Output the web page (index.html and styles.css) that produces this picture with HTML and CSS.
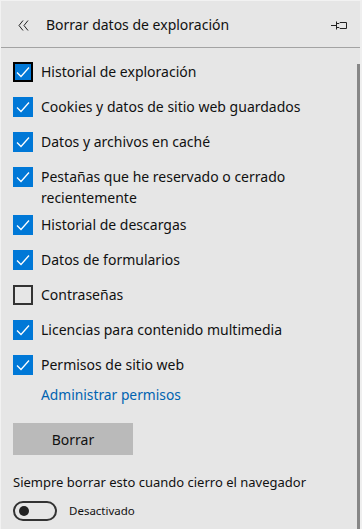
FILE: index.html
```html
<!DOCTYPE html>
<html lang="es">
<head>
<meta charset="utf-8">
<title>Borrar datos de exploración</title>
<link rel="stylesheet" href="styles.css">
</head>
<body>
<div class="panel">
  <header class="header">
    <span class="back">
      <svg width="11" height="11" viewBox="0 0 11 11"><path d="M5 0.5 L1 5.5 L5 10.5 M10 0.5 L6 5.5 L10 10.5" fill="none" stroke="#222" stroke-width="1"/></svg>
    </span>
    <h1 class="title">Borrar datos de exploración</h1>
    <span class="pin">
      <svg width="16" height="9" viewBox="0 0 16 9"><path d="M0 4.5 H5 M5.5 0.5 V8.5 M5.5 2.5 H8 L9 1.5 H15.5 V7.5 H9 L8 6.5 H5.5" fill="none" stroke="#222" stroke-width="1"/></svg>
    </span>
  </header>
  <main class="content">
    <ul class="list">
      <li class="item"><span class="box checked focus"><svg viewBox="0 0 20 20"><path d="M4 10.5 L8 14.5 L16 5.5" fill="none" stroke="#fff" stroke-width="1.3"/></svg></span><span class="label">Historial de exploración</span></li>
      <li class="item"><span class="box checked"><svg viewBox="0 0 20 20"><path d="M4 10.5 L8 14.5 L16 5.5" fill="none" stroke="#fff" stroke-width="1.3"/></svg></span><span class="label">Cookies y datos de sitio web guardados</span></li>
      <li class="item"><span class="box checked"><svg viewBox="0 0 20 20"><path d="M4 10.5 L8 14.5 L16 5.5" fill="none" stroke="#fff" stroke-width="1.3"/></svg></span><span class="label">Datos y archivos en caché</span></li>
      <li class="item"><span class="box checked"><svg viewBox="0 0 20 20"><path d="M4 10.5 L8 14.5 L16 5.5" fill="none" stroke="#fff" stroke-width="1.3"/></svg></span><span class="label">Pestañas que he reservado o cerrado recientemente</span></li>
      <li class="item"><span class="box checked"><svg viewBox="0 0 20 20"><path d="M4 10.5 L8 14.5 L16 5.5" fill="none" stroke="#fff" stroke-width="1.3"/></svg></span><span class="label">Historial de descargas</span></li>
      <li class="item"><span class="box checked"><svg viewBox="0 0 20 20"><path d="M4 10.5 L8 14.5 L16 5.5" fill="none" stroke="#fff" stroke-width="1.3"/></svg></span><span class="label">Datos de formularios</span></li>
      <li class="item"><span class="box"></span><span class="label">Contraseñas</span></li>
      <li class="item"><span class="box checked"><svg viewBox="0 0 20 20"><path d="M4 10.5 L8 14.5 L16 5.5" fill="none" stroke="#fff" stroke-width="1.3"/></svg></span><span class="label">Licencias para contenido multimedia</span></li>
      <li class="item"><span class="box checked"><svg viewBox="0 0 20 20"><path d="M4 10.5 L8 14.5 L16 5.5" fill="none" stroke="#fff" stroke-width="1.3"/></svg></span><span class="label">Permisos de sitio web</span></li>
    </ul>
    <a class="link" href="#">Administrar permisos</a>
    <button class="btn" type="button">Borrar</button>
    <p class="always">Siempre borrar esto cuando cierro el navegador</p>
    <div class="toggle-row">
      <span class="toggle"><span class="knob"></span></span>
      <span class="toggle-label">Desactivado</span>
    </div>
  </main>
  <div class="scrollbar"></div>
</div>
</body>
</html>
```
FILE: styles.css
```css
* { box-sizing: border-box; }
html, body { margin: 0; padding: 0; }
body {
  background: #e6e6e6;
  font-family: "Noto Sans", "Open Sans", sans-serif;
  color: #000;
}
.panel {
  position: relative;
  width: 362px;
  height: 529px;
  background: #e6e6e6;
  border-left: 1px solid #f2f2f2;
  border-top: 1px solid #f2f2f2;
  border-right: 2px solid #efefef;
  overflow: hidden;
}
.header {
  display: flex;
  align-items: center;
  height: 47px;
  border-bottom: 1px solid #a3a3a3;
  padding: 2px 0 0 17px;
}
.back { display: flex; width: 11px; height: 11px; margin-right: 17px; }
.title {
  flex: 1;
  margin: 0;
  font-size: 14px;
  font-weight: normal;
  line-height: 20px;
  color: #111;
}
.pin { display: flex; margin-right: 13px; }
.content { padding: 10px 0 0 12px; }
.list { list-style: none; margin: 0; padding: 0; }
.item {
  display: flex;
  align-items: flex-start;
  min-height: 35px;
}
.box {
  flex: none;
  width: 20px;
  height: 20px;
  margin-top: 4px;
  margin-right: 8px;
  border: 2px solid #333;
}
.box svg { display: block; width: 20px; height: 20px; margin: -2px; }
.box.checked { background: #0078d7; border-color: #0078d7; }
.box.focus { border-color: #000; }
.label {
  font-size: 14px;
  line-height: 21px;
  padding: 3px 20px 3px 0;
  color: #111;
}
.link {
  display: block;
  margin: 0 0 0 28px;
  font-size: 13.8px;
  line-height: 18px;
  color: #0063b1;
  text-decoration: none;
}
.btn {
  display: block;
  margin-top: 19px;
  width: 120px;
  height: 32px;
  border: 0;
  background: #bababa;
  font-family: inherit;
  font-size: 14px;
  color: #111;
  padding: 0;
}
.always {
  margin: 17px 0 0;
  font-size: 13px;
  line-height: 20px;
  color: #111;
}
.toggle-row {
  display: flex;
  align-items: center;
  margin-top: 9px;
}
.toggle {
  display: flex;
  align-items: center;
  width: 44px;
  height: 20px;
  border: 2px solid #333;
  border-radius: 10px;
  padding-left: 4px;
}
.knob { width: 10px; height: 10px; border-radius: 50%; background: #222; }
.toggle-label {
  margin-left: 12px;
  font-size: 11.5px;
  line-height: 16px;
  color: #111;
}
.scrollbar {
  position: absolute;
  top: 63px;
  right: 0;
  bottom: 0;
  width: 3px;
  background: #878787;
}
```
